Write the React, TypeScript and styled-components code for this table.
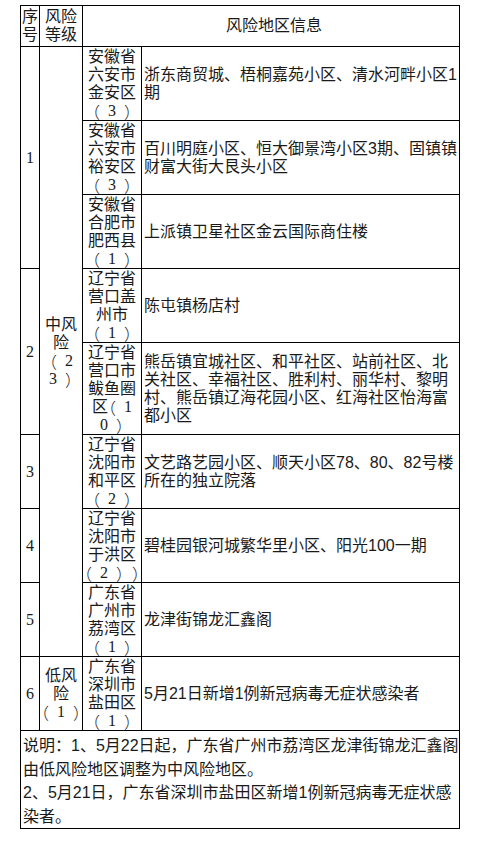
import styled, { createGlobalStyle } from "styled-components";

const GlobalStyle = createGlobalStyle`
  html, body {
    margin: 0;
    padding: 0;
    background: #fff;
  }
`;

type AreaRow = {
  no?: string;
  noSpan?: number;
  level?: string[];
  levelSpan?: number;
  area: string[];
  info: string[];
};

const rows: AreaRow[] = [
  {
    no: "1",
    noSpan: 3,
    level: ["中风", "险", "（2", "3）"],
    levelSpan: 8,
    area: ["安徽省", "六安市", "金安区", "（3）"],
    info: ["浙东商贸城、梧桐嘉苑小区、清水河畔小区1", "期"],
  },
  {
    area: ["安徽省", "六安市", "裕安区", "（3）"],
    info: ["百川明庭小区、恒大御景湾小区3期、固镇镇", "财富大街大艮头小区"],
  },
  {
    area: ["安徽省", "合肥市", "肥西县", "（1）"],
    info: ["上派镇卫星社区金云国际商住楼"],
  },
  {
    no: "2",
    noSpan: 2,
    area: ["辽宁省", "营口盖", "州市", "（1）"],
    info: ["陈屯镇杨店村"],
  },
  {
    area: ["辽宁省", "营口市", "鲅鱼圈", "区（1", "0）"],
    info: [
      "熊岳镇宜城社区、和平社区、站前社区、北",
      "关社区、幸福社区、胜利村、丽华村、黎明",
      "村、熊岳镇辽海花园小区、红海社区怡海富",
      "都小区",
    ],
  },
  {
    no: "3",
    area: ["辽宁省", "沈阳市", "和平区", "（2）"],
    info: ["文艺路艺园小区、顺天小区78、80、82号楼", "所在的独立院落"],
  },
  {
    no: "4",
    area: ["辽宁省", "沈阳市", "于洪区", "（2））"],
    info: ["碧桂园银河城繁华里小区、阳光100一期"],
  },
  {
    no: "5",
    area: ["广东省", "广州市", "荔湾区", "（1）"],
    info: ["龙津街锦龙汇鑫阁"],
  },
  {
    no: "6",
    level: ["低风", "险", "（1）"],
    area: ["广东省", "深圳市", "盐田区", "（1）"],
    info: ["5月21日新增1例新冠病毒无症状感染者"],
  },
];

const notes = [
  "说明：1、5月22日起，广东省广州市荔湾区龙津街锦龙汇鑫阁",
  "由低风险地区调整为中风险地区。",
  "2、5月21日，广东省深圳市盐田区新增1例新冠病毒无症状感",
  "染者。",
];

// the brackets in the picture sit at the outer edge of a full em box
const withParens = (text: string) =>
  text.split(/([（）])/).map((part, i) => {
    if (part === "（") return <Paren key={i} $side="open">（</Paren>;
    if (part === "）") return <Paren key={i} $side="close">）</Paren>;
    return part;
  });

const App = () => {
  return (
    <Page>
      <GlobalStyle />
      <Table>
        <colgroup>
          <col style={{ width: 19 }} />
          <col style={{ width: 43 }} />
          <col style={{ width: 59 }} />
          <col />
        </colgroup>
        <tbody>
          <tr>
            <HeadCell>
              <Line>序</Line>
              <Line>号</Line>
            </HeadCell>
            <HeadCell>
              <Line>风险</Line>
              <Line>等级</Line>
            </HeadCell>
            <TitleCell colSpan={2}>风险地区信息</TitleCell>
          </tr>
          {rows.map((r, i) => (
            <tr key={i}>
              {r.no && <NumCell rowSpan={r.noSpan ?? 1}>{r.no}</NumCell>}
              {r.level && (
                <LevelCell rowSpan={r.levelSpan ?? 1}>
                  {r.level.map((l) => (
                    <Line key={l}>{withParens(l)}</Line>
                  ))}
                </LevelCell>
              )}
              <AreaCell>
                {r.area.map((a, j) => (
                  <Line key={j}>{withParens(a)}</Line>
                ))}
              </AreaCell>
              <InfoCell>
                {r.info.map((t, j) => (
                  <Line key={j}>{t}</Line>
                ))}
              </InfoCell>
            </tr>
          ))}
          <tr>
            <NoteCell colSpan={4}>
              {notes.map((n, j) => (
                <NoteLine key={j}>{n}</NoteLine>
              ))}
            </NoteCell>
          </tr>
        </tbody>
      </Table>
    </Page>
  );
};

export default App;

const Page = styled.div`
  padding: 5px 0 0 20px;
  width: 480px;
  height: 843px;
  box-sizing: border-box;
`;

const Table = styled.table`
  width: 440px;
  border-collapse: collapse;
  table-layout: fixed;
  font-family: "Liberation Sans", "Noto Sans CJK SC", sans-serif;
  font-size: 16px;
  line-height: 18px;
  color: #1a1a1a;

  td {
    border: 1px solid #000;
    padding: 0;
  }
`;

const Line = styled.div`
  white-space: nowrap;
  height: 18px;
`;

const NoteLine = styled.div`
  white-space: nowrap;
  height: 23.5px;
`;

const Paren = styled.span<{ $side: "open" | "close" }>`
  display: inline-block;
  width: 16px;
  height: 18px;
  line-height: 18px;
  vertical-align: top;
  text-align: ${(p) => (p.$side === "open" ? "left" : "right")};
  font-family: "Noto Sans CJK SC", sans-serif;
  font-weight: 300;
  font-feature-settings: "halt" 1;
`;

const HeadCell = styled.td`
  text-align: center;
  vertical-align: middle;
  padding: 2px 0 !important;
`;

const TitleCell = styled.td`
  text-align: left;
  vertical-align: middle;
  padding-left: 143px !important;
`;

const NumCell = styled.td`
  text-align: center;
  vertical-align: middle;
  font-family: "Liberation Serif", "Noto Sans CJK SC", serif;
`;

const LevelCell = styled.td`
  text-align: center;
  vertical-align: middle;
  font-family: "Liberation Serif", "Noto Sans CJK SC", serif;
`;

const AreaCell = styled.td`
  text-align: center;
  vertical-align: middle;
  padding-top: 1px !important;
  font-family: "Liberation Serif", "Noto Sans CJK SC", serif;
`;

const InfoCell = styled.td`
  text-align: left;
  vertical-align: middle;
  padding-left: 2px !important;
`;

const NoteCell = styled.td`
  text-align: left;
  vertical-align: top;
  line-height: 23.5px;
  padding: 3px 0 0 2px !important;
`;
